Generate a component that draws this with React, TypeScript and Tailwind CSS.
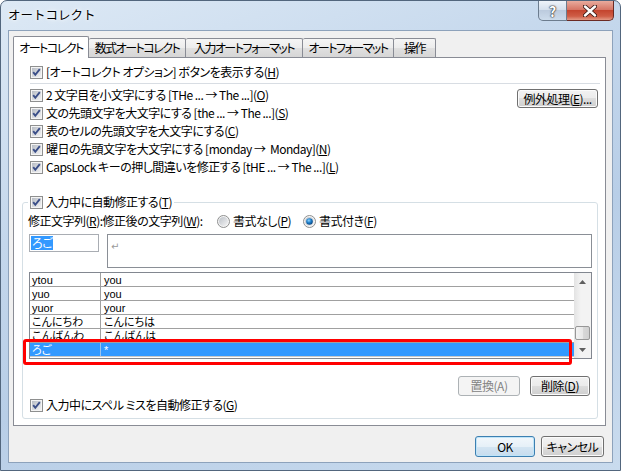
import React from 'react';

function CheckBox() {
  return (
    <svg width="13" height="13" viewBox="0 0 13 13" className="shrink-0">
      <defs>
        <linearGradient id="cbg" x1="0" y1="0" x2="1" y2="1">
          <stop offset="0" stopColor="#b7bcc4" />
          <stop offset="1" stopColor="#f2f2f3" />
        </linearGradient>
      </defs>
      <rect x="0.5" y="0.5" width="12" height="12" fill="#f4f4f4" stroke="#8e8f8f" />
      <rect x="2" y="2" width="9" height="9" fill="url(#cbg)" />
      <path d="M3.2 6.2 L5.3 8.8 L9.8 3.2" fill="none" stroke="#3a4e88" strokeWidth="1.9" />
    </svg>
  );
}

function Radio({ on }: { on?: boolean }) {
  return (
    <svg width="13" height="13" viewBox="0 0 13 13" className="shrink-0">
      <defs>
        <linearGradient id="rbg" x1="0" y1="0" x2="1" y2="1">
          <stop offset="0" stopColor="#bcc1c8" />
          <stop offset="1" stopColor="#f4f4f5" />
        </linearGradient>
        <radialGradient id="rdot" cx="0.4" cy="0.35" r="0.7">
          <stop offset="0" stopColor="#8fd3ff" />
          <stop offset="0.5" stopColor="#1a7cc8" />
          <stop offset="1" stopColor="#0a3f78" />
        </radialGradient>
      </defs>
      <circle cx="6.5" cy="6.5" r="6" fill="#f4f4f4" stroke="#8e8f8f" />
      <circle cx="6.5" cy="6.5" r="4.5" fill="url(#rbg)" />
      {on && <circle cx="6.5" cy="6.5" r="3.3" fill="url(#rdot)" />}
    </svg>
  );
}

function Arrow({ down }: { down?: boolean }) {
  return (
    <svg width="7" height="4" viewBox="0 0 7 4">
      <path d={down ? 'M0 0 L7 0 L3.5 4 Z' : 'M0 4 L7 4 L3.5 0 Z'} fill="#5f5f5f" />
    </svg>
  );
}

const rows = [
  { a: 'ytou', b: 'you' },
  { a: 'yuo', b: 'you' },
  { a: 'yuor', b: 'your' },
  { a: 'こんにちわ', b: 'こんにちは' },
  { a: 'こんばんわ', b: 'こんばんは' },
];

const options = [
  <>2 文字目を小文字にする [THe ... → The ...](<u>O</u>)</>,
  <>文の先頭文字を大文字にする [the ... → The ...](<u>S</u>)</>,
  <>表のセルの先頭文字を大文字にする(<u>C</u>)</>,
  <>曜日の先頭文字を大文字にする [monday →  Monday](<u>N</u>)</>,
  <>CapsLock キーの押し間違いを修正する [tHE ... → The ...](<u>L</u>)</>,
];

export default function App() {
  return (
    <div className="w-[621px] h-[471px] flex flex-col rounded-t-[7px] border border-[#52667d] bg-[linear-gradient(160deg,#dde9f5_0%,#c4d7ec_35%,#b8cee7_60%,#c9dbee_100%)] overflow-hidden font-['Noto_Sans_CJK_JP',sans-serif] text-[12px] text-black">
      {/* title bar */}
      <div className="h-[29px] flex items-start shrink-0">
        <div className="self-center ml-[7px] text-[12.5px] [text-shadow:0_0_6px_#fff,0_0_3px_#fff]">オートコレクト</div>
        <div className="ml-auto mr-[6px] flex">
          <div className="w-[29px] h-[20px] flex items-center justify-center border border-t-0 border-[#6c7c8e] rounded-bl-[5px] bg-[linear-gradient(#eef3f9,#d5e0ed_45%,#bccbde_50%,#cddcec)] text-[14px] font-bold leading-none text-white [text-shadow:0_0_1px_#333,0_0_1px_#333,0_0_2px_#333]">
            ?
          </div>
          <div className="w-[47px] h-[20px] flex items-center justify-center border border-t-0 border-l-0 border-[#6b2a24] rounded-br-[5px] bg-[linear-gradient(#e9ab9d,#d67666_45%,#c4452f_50%,#cf5d46_80%,#e39a86)]">
            <svg width="14" height="12" viewBox="0 0 14 12">
              <path d="M2 1.5 L12 10.5 M12 1.5 L2 10.5" stroke="#3b1a16" strokeWidth="4.2" strokeLinecap="round" />
              <path d="M2 1.5 L12 10.5 M12 1.5 L2 10.5" stroke="#ffffff" strokeWidth="2.4" strokeLinecap="round" />
            </svg>
          </div>
        </div>
      </div>

      {/* client area */}
      <div className="flex-1 mx-[7px] mb-[7px] border border-[#8da2bb] bg-[#f0f0f0] flex flex-col pt-[5px] [font-feature-settings:'palt'] tracking-[-0.5px]">
        {/* tabs */}
        <div className="flex items-end ml-[4px] h-[21px] whitespace-nowrap tracking-[-1.5px]">
          <div className="relative z-10 w-[76px] h-[22px] -mb-px flex items-center justify-center bg-white border border-b-0 border-[#898c95] rounded-t-[2px]">
            オートコレクト
          </div>
          <div className="w-[97px] h-[19px] flex items-center justify-center border border-l-0 border-b-0 border-[#898c95] rounded-t-[2px] bg-[linear-gradient(#f5f5f5,#ececec_50%,#e0e0e0_50%,#d6d6d6)]">
            数式オートコレクト
          </div>
          <div className="w-[117px] h-[19px] flex items-center justify-center border border-l-0 border-b-0 border-[#898c95] rounded-t-[2px] bg-[linear-gradient(#f5f5f5,#ececec_50%,#e0e0e0_50%,#d6d6d6)]">
            入力オートフォーマット
          </div>
          <div className="w-[91px] h-[19px] flex items-center justify-center border border-l-0 border-b-0 border-[#898c95] rounded-t-[2px] bg-[linear-gradient(#f5f5f5,#ececec_50%,#e0e0e0_50%,#d6d6d6)]">
            オートフォーマット
          </div>
          <div className="w-[42px] h-[19px] flex items-center justify-center border border-l-0 border-b-0 border-[#898c95] rounded-t-[2px] bg-[linear-gradient(#f5f5f5,#ececec_50%,#e0e0e0_50%,#d6d6d6)]">
            操作
          </div>
        </div>

        {/* tab panel */}
        <div className="ml-[4px] w-[593px] h-[369px] border border-[#898c95] bg-white pt-[5px] flex flex-col">
          <div className="h-[18px] flex items-center gap-[3px] ml-[16px]">
            <CheckBox />
            <span>[オートコレクト オプション] ボタンを表示する(<u>H</u>)</span>
          </div>
          <div className="mt-[2px] h-px bg-[#d8dde3] ml-[16px] mr-[5px]" />

          <div className="mt-[2px] flex justify-between">
            <div className="flex flex-col ml-[16px]">
              {options.map((o, i) => (
                <div key={i} className="h-[18px] flex items-center gap-[3px]">
                  <CheckBox />
                  <span className="whitespace-pre">{o}</span>
                </div>
              ))}
            </div>
            <button className="mt-[3px] mr-[7px] w-[81px] h-[19px] flex items-center justify-center border border-[#707070] rounded-[3px] shadow-[inset_0_0_0_1px_#fbfbfb] bg-[linear-gradient(#f2f2f2,#ebebeb_50%,#dddddd_50%,#cfcfcf)]">
              例外処理(<u>E</u>)...
            </button>
          </div>

          {/* group box */}
          <fieldset className="mt-[17px] ml-[8px] mr-[7px] border border-[#d5dfe5] rounded-[3px] pb-[4px]">
            <legend className="ml-[5px] px-[2px] h-[18px] flex items-center gap-[3px]">
              <CheckBox />
              <span>入力中に自動修正する(<u>T</u>)</span>
            </legend>

            <div className="mt-[2px] h-[16px] flex items-center ml-[5px]">
              <div className="w-[189px] whitespace-nowrap">
                修正文字列(<u>R</u>):修正後の文字列(<u>W</u>):
              </div>
              <div className="w-[86px] flex items-center gap-[3px]">
                <Radio />
                <span>書式なし(<u>P</u>)</span>
              </div>
              <div className="flex items-center gap-[3px]">
                <Radio on />
                <span>書式付き(<u>F</u>)</span>
              </div>
            </div>

            <div className="mt-[5px] ml-[6px] flex items-start gap-[8px]">
              <div className="w-[70px] h-[18px] border border-[#a9adb3] flex items-center pl-[1px]">
                <span className="bg-[#3399ff] text-white leading-[14px] px-px">ろご</span>
              </div>
              <div className="w-[485px] h-[34px] border border-[#8a8f96] pl-[3px] pt-[1px]">
                <span className="text-[10px] text-[#9a9a9a] font-['DejaVu_Sans',sans-serif]">↵</span>
              </div>
            </div>

            <div className="relative mt-[4px] ml-[6px] mr-[5px] h-[87px] border border-[#828790] flex text-[11px] tracking-normal font-['Liberation_Sans','Noto_Sans_CJK_JP',sans-serif]">
              <div className="flex-1 flex flex-col">
                {rows.map((r) => (
                  <div key={r.a} className="h-[14px] flex items-center border-b border-[#a0a0a0] leading-[12px]">
                    <div className="w-[71px] h-full flex items-center border-r border-[#a0a0a0] pl-[2px] whitespace-nowrap">{r.a}</div>
                    <div className="pl-[3px]">{r.b}</div>
                  </div>
                ))}
                <div className="h-[14px] flex items-center border-b border-[#c8c8c8] bg-[#3399ff] text-white leading-[12px]">
                  <div className="w-[71px] h-full flex items-center border-r border-[#9cc4ee] pl-[2px]">ろご</div>
                  <div className="pl-[3px]">*</div>
                </div>
              </div>
              <div className="w-[17px] flex flex-col bg-[linear-gradient(to_right,#e3e3e3,#f3f3f3_40%,#f3f3f3)]">
                <div className="h-[17px] flex items-center justify-center">
                  <Arrow />
                </div>
                <div className="h-[36px]" />
                <div className="ml-px w-[15px] h-[14px] border border-[#979797] rounded-[2px] bg-[linear-gradient(to_right,#f3f3f3,#e8e8e8_50%,#d9d9d9_50%,#d0d0d0)]" />
                <div className="h-px" />
                <div className="h-[17px] flex items-center justify-center">
                  <Arrow down />
                </div>
              </div>
              <div className="absolute left-[-7px] top-[66px] w-[549px] h-[26px] border-[3px] border-[#ff0000] rounded-[3px]" />
            </div>

            <div className="mt-[17px] mr-[7px] flex justify-end gap-[10px]">
              <button className="w-[62px] h-[20px] flex items-center justify-center border border-[#adb2b5] rounded-[3px] bg-[#f4f4f4] text-[#838383]">
                置換(A)
              </button>
              <button className="w-[60px] h-[20px] flex items-center justify-center border border-[#707070] rounded-[3px] shadow-[inset_0_0_0_1px_#fbfbfb] bg-[linear-gradient(#f2f2f2,#ebebeb_50%,#dddddd_50%,#cfcfcf)]">
                削除(<u>D</u>)
              </button>
            </div>

            <div className="h-[18px] ml-[7px] flex items-center gap-[3px]">
              <CheckBox />
              <span>入力中にスペル ミスを自動修正する(<u>G</u>)</span>
            </div>
          </fieldset>
        </div>

        {/* dialog buttons */}
        <div className="mt-[10px] mr-[8px] flex justify-end gap-[6px]">
          <button className="w-[60px] h-[21px] flex items-center justify-center border border-[#3c7fb1] rounded-[3px] shadow-[inset_0_0_0_1px_#bfe4f8] bg-[linear-gradient(#f2f7fb,#e6f0f8_50%,#d4e5f2_50%,#c6dcee)]">
            OK
          </button>
          <button className="w-[63px] h-[21px] flex items-center justify-center border border-[#707070] rounded-[3px] shadow-[inset_0_0_0_1px_#fbfbfb] bg-[linear-gradient(#f2f2f2,#ebebeb_50%,#dddddd_50%,#cfcfcf)]">
            キャンセル
          </button>
        </div>
      </div>
    </div>
  );
}
